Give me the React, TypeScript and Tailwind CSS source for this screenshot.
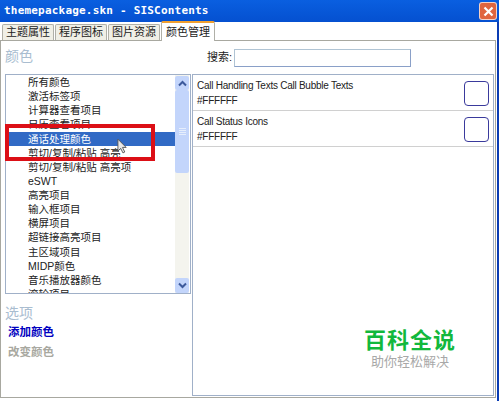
const CJK = "font-['Liberation_Sans','Noto_Sans_CJK_SC',sans-serif]"

const items = ['所有颜色', '激活标签项', '计算器查看项目', '日历查看项目', '通话处理颜色', '剪切/复制/粘贴 高亮', '剪切/复制/粘贴 高亮项', 'eSWT', '高亮项目', '输入框项目', '横屏项目', '超链接高亮项目', '主区域项目', 'MIDP颜色', '音乐播放器颜色', '滚轮项目']

const tabs = ['主题属性', '程序图标', '图片资源']

function Chevron({ up }: { up?: boolean }) {
  return (
    <svg width="9" height="7" viewBox="0 0 9 7" className={up ? '' : 'rotate-180'}>
      <path d="M1 5.500 4.500 2 8 5.500" fill="none" stroke="#3d5a9c" strokeWidth="2" />
    </svg>
  )
}

function ColorRow({ name }: { name: string }) {
  return (
    <div className="h-[36px] flex justify-between border-b border-[#d0d0d0] pl-[4px] pr-[4px] pt-[4px] shrink-0">
      <div className="text-[10px] leading-[14px] text-[#222] tracking-[-0.25px]">
        <div>{name}</div>
        <div className="mt-[1px]">#FFFFFF</div>
      </div>
      <div className="w-[25px] h-[25px] mt-[2px] rounded-[4px] border border-[#3a3a9c] bg-white" />
    </div>
  )
}

export default function App() {
  return (
    <div className={`w-[499px] h-[401px] bg-white flex flex-col overflow-hidden ${CJK}`}>
      <div className="h-[22px] shrink-0 bg-gradient-to-b from-[#0a5fe0] to-[#0550d0] flex items-center justify-between pl-[4px] pr-[2px]">
        <span className="text-white text-[11px] font-bold font-['DejaVu_Sans_Mono',monospace] tracking-[0.2px]">themepackage.skn - SISContents</span>
        <div className="w-[18px] h-[18px] rounded-[3px] bg-[#e0653f] border border-white/70 flex items-center justify-center">
          <svg width="11" height="11" viewBox="0 0 11 11">
            <path d="M1.500 1.500 9.500 9.500M9.500 1.500 1.500 9.500" stroke="#fff" strokeWidth="2.2" />
          </svg>
        </div>
      </div>
      <div className="flex-1 flex flex-col border-r-[2px] border-r-[#0a3cb4] min-h-0">
        <div className="h-[18px] shrink-0 flex items-end pl-[2px] text-[11px] text-[#222]">
          {tabs.map(t => (
            <div key={t} className="h-[16px] w-[52px] mr-[1px] flex items-center justify-center bg-[#f0efe6] border border-b-0 border-[#b0b0a8] rounded-t-[2px]">{t}</div>
          ))}
          <div className="h-[20px] w-[54px] flex items-center justify-center bg-white border border-b-0 border-[#b0b0a8] border-t-[2px] border-t-[#f0a030] rounded-t-[2px] relative top-[1px]">颜色管理</div>
        </div>
        <div className="flex-1 min-h-0 border border-[#a8a8a0] flex flex-col mr-[1px] mb-[3px] pl-[4px] pr-[1px] pb-[1px]">
          <div className="h-[33px] shrink-0 flex">
            <div className="w-[187px] text-[14px] leading-[20px] text-[#a9bdd0] pt-[5px]">颜色</div>
            <div className="flex items-center pl-[15px] text-[11px] text-[#222]">
              <span className="w-[27px]">搜索:</span>
              <div className="w-[177px] h-[18px] border border-[#b0c4d4] border-r-[#8aa0c8] border-b-[#8aa0c8] bg-white" />
            </div>
          </div>
          <div className="flex-1 min-h-0 flex gap-[1px]">
            <div className="w-[186px] flex flex-col">
              <div className="h-[220px] shrink-0 flex border border-[#a0b0c8] relative">
                <div className="flex-1 overflow-hidden">
                  {items.map((item, i) => (
                    <div key={item} className={`h-[14.13px] leading-[14px] text-[10.5px] pl-[22px] whitespace-nowrap ${i === 4 ? 'bg-[#316ac5] text-white' : 'text-[#222]'}`}>{item}</div>
                  ))}
                </div>
                <div className="w-[14px] mr-[1px] shrink-0 bg-[#f4f4ee] flex flex-col">
                  <div className="h-[14px] mt-[1px] bg-[#c3d5fb] rounded-[2px] flex items-center justify-center"><Chevron up /></div>
                  <div className="h-[83px] bg-[#c3d5fb] rounded-[2px] flex flex-col items-center justify-center gap-[1px]">
                    <div className="w-[7px] h-[1px] bg-[#e6eefc]" />
                    <div className="w-[7px] h-[1px] bg-[#e6eefc]" />
                    <div className="w-[7px] h-[1px] bg-[#e6eefc]" />
                    <div className="w-[7px] h-[1px] bg-[#e6eefc]" />
                  </div>
                  <div className="flex-1" />
                  <div className="h-[15px] bg-[#c3d5fb] rounded-[2px] flex items-center justify-center"><Chevron /></div>
                </div>
                <div className="absolute left-[-1px] top-[49px] w-[150px] h-[37px] border-[4px] border-[#dc0f16]" />
                <svg className="absolute left-[111px] top-[63px]" width="11" height="17" viewBox="0 0 12 18">
                  <path d="M1 1v13l3-3 2.500 5 2-1-2.500-5H10z" fill="#e8e8e8" stroke="#555" />
                </svg>
              </div>
              <div className="text-[14px] leading-[18px] text-[#a9bdd0] mt-[10px]">选项</div>
              <div className="text-[11.500px] leading-[14px] font-bold text-[#0000c0] pl-[3px] mt-[3px]">添加颜色</div>
              <div className="text-[11.500px] leading-[14px] font-bold text-[#a8a8a0] pl-[3px] mt-[6px]">改变颜色</div>
            </div>
            <div className="flex-1 min-w-0 border border-[#a0b0c8] flex flex-col relative">
              <ColorRow name="Call Handling Texts Call Bubble Texts" />
              <ColorRow name="Call Status Icons" />
              <div className="absolute right-[37px] bottom-[26px] flex flex-col items-center">
                <div className="text-[22px] leading-[26px] font-bold text-[#12b83c] tracking-[1px]">百科全说</div>
                <div className="text-[13px] leading-[15px] text-[#a8a8a8]">助你轻松解决</div>
              </div>
            </div>
          </div>
        </div>
      </div>
    </div>
  )
}
